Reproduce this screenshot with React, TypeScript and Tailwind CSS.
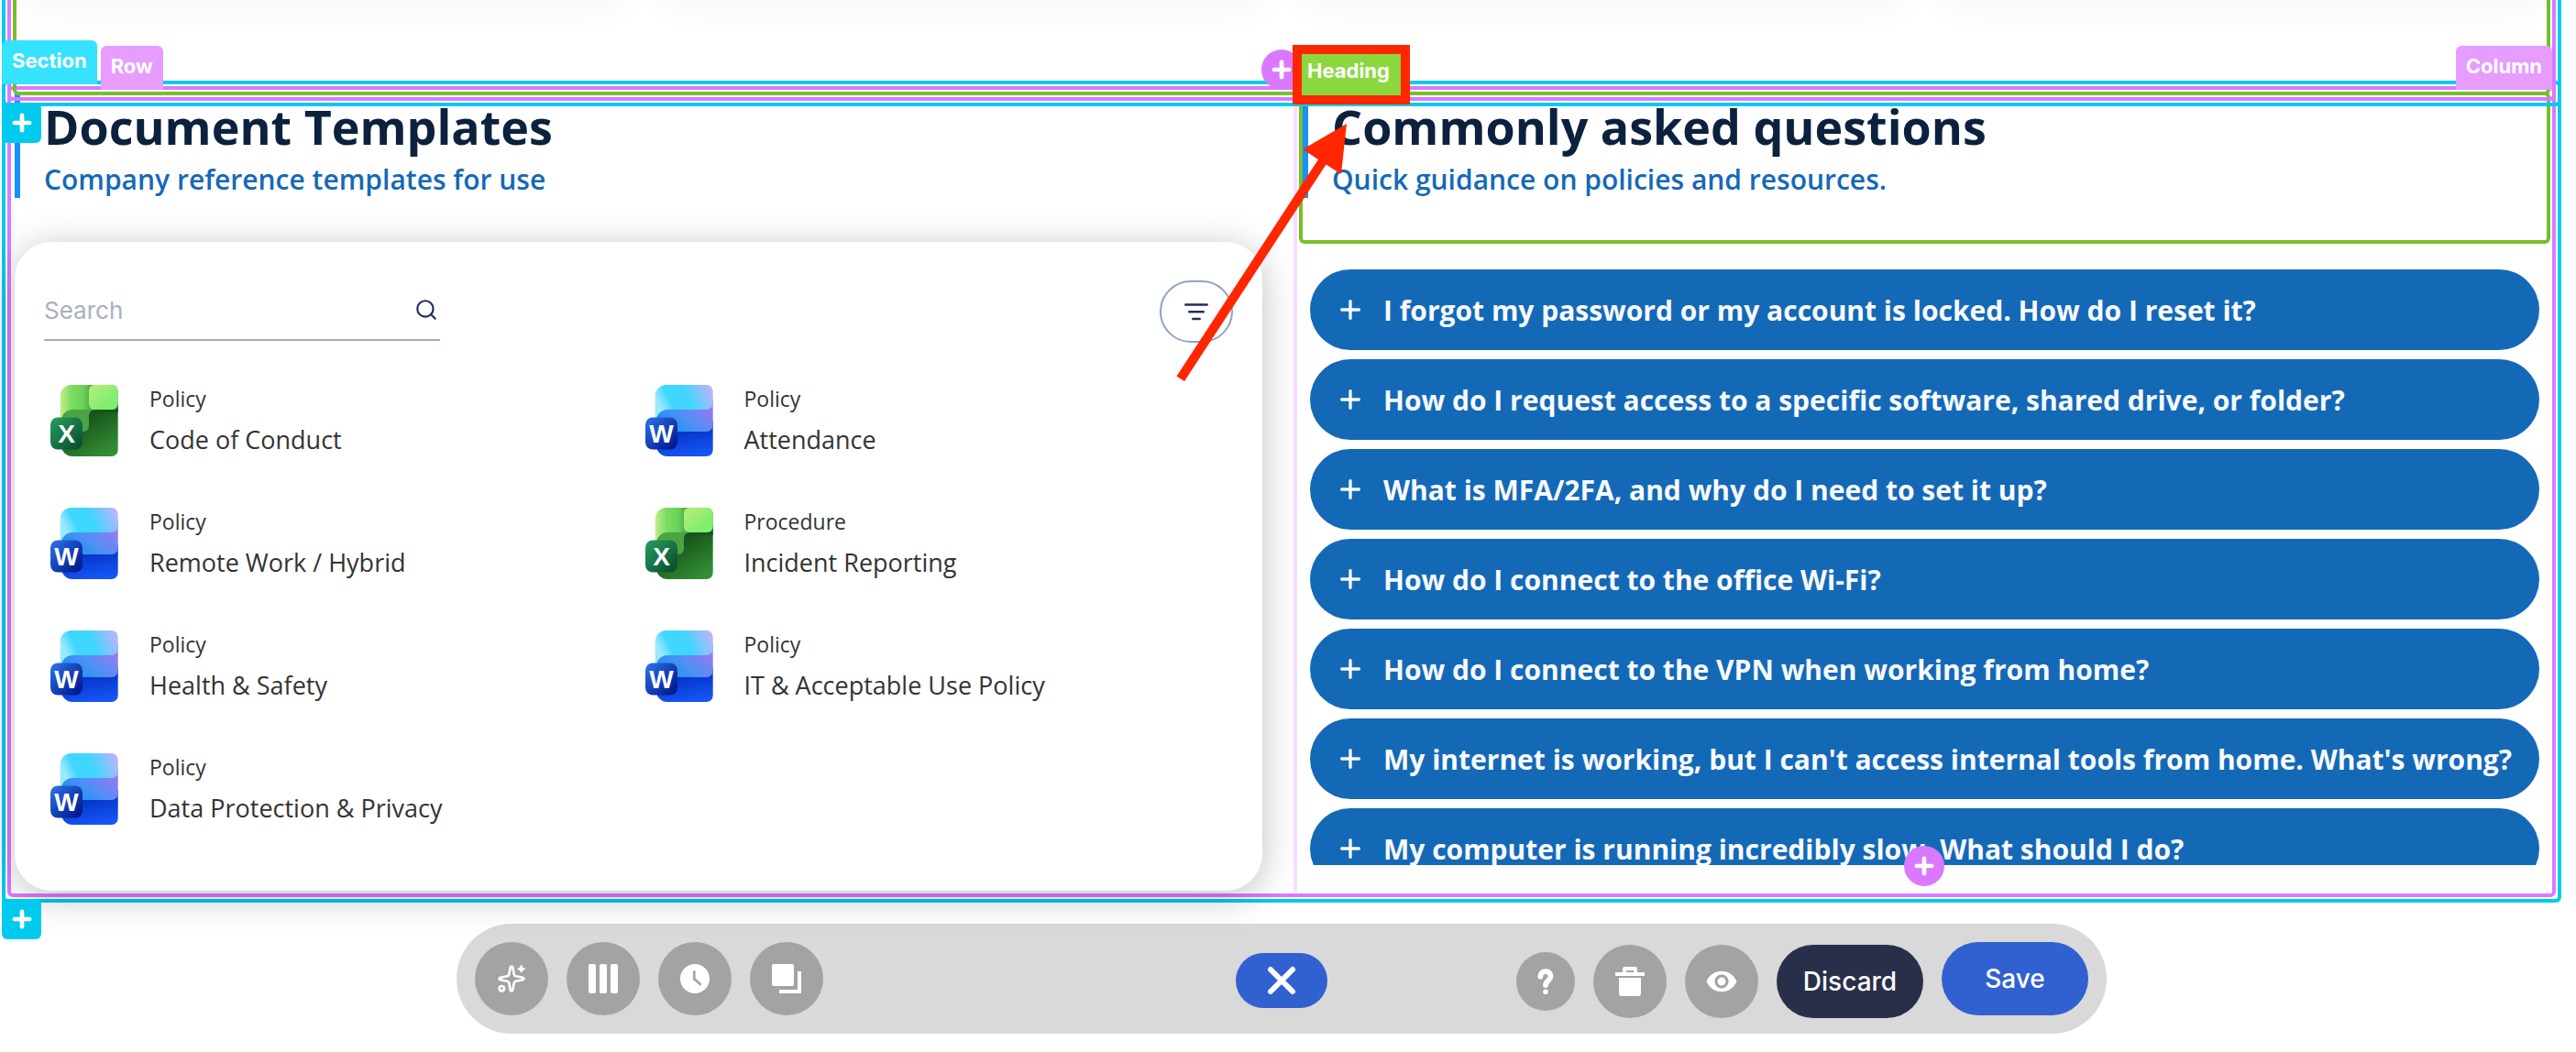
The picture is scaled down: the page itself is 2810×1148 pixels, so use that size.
import { useState } from 'react';
import { Plus, Search, Sparkles, X } from 'lucide-react';
import { MdVisibility } from 'react-icons/md';

type FileKind = 'word' | 'excel';

const DOCUMENTS: { kind: FileKind; type: string; title: string }[] = [
  { kind: 'excel', type: 'Policy', title: 'Code of Conduct' },
  { kind: 'word', type: 'Policy', title: 'Attendance' },
  { kind: 'word', type: 'Policy', title: 'Remote Work / Hybrid' },
  { kind: 'excel', type: 'Procedure', title: 'Incident Reporting' },
  { kind: 'word', type: 'Policy', title: 'Health & Safety' },
  { kind: 'word', type: 'Policy', title: 'IT & Acceptable Use Policy' },
  { kind: 'word', type: 'Policy', title: 'Data Protection & Privacy' },
];

const QUESTIONS = [
  'I forgot my password or my account is locked. How do I reset it?',
  'How do I request access to a specific software, shared drive, or folder?',
  'What is MFA/2FA, and why do I need to set it up?',
  'How do I connect to the office Wi-Fi?',
  'How do I connect to the VPN when working from home?',
  "My internet is working, but I can't access internal tools from home. What's wrong?",
  'My computer is running incredibly slow. What should I do?',
];

function WordIcon() {
  return (
    <svg viewBox="0 0 74 78" className="w-[74px] h-[78px] shrink-0" aria-hidden="true">
      <defs>
        <linearGradient id="word-top" x1="0" y1="0.3" x2="1" y2="0">
          <stop offset="0" stopColor="#9be9fb" />
          <stop offset="0.2" stopColor="#3fd6ff" />
          <stop offset="0.5" stopColor="#3fd6ff" />
          <stop offset="1" stopColor="#cdb0ff" />
        </linearGradient>
        <linearGradient id="word-mid" x1="0" y1="1" x2="1" y2="0.3">
          <stop offset="0.2" stopColor="#2292f0" />
          <stop offset="0.55" stopColor="#5090f6" />
          <stop offset="1" stopColor="#9a78f0" />
        </linearGradient>
        <linearGradient id="word-low" x1="0.3" y1="0" x2="0.6" y2="1">
          <stop offset="0.3" stopColor="#0535c8" />
          <stop offset="1" stopColor="#1656f6" />
        </linearGradient>
        <linearGradient id="word-badge" x1="0" y1="0" x2="1" y2="1">
          <stop offset="0" stopColor="#2f74ea" />
          <stop offset="0.9" stopColor="#001a8e" />
        </linearGradient>
      </defs>
      <path d="M12 40H73.7V71a7 7 0 0 1-7 7H24a12 12 0 0 1-12-12Z" fill="url(#word-low)" />
      <path d="M12 15H73.7V44a7 7 0 0 1-7 7H12Z" fill="url(#word-mid)" />
      <path
        d="M22.7 0H66.7a7 7 0 0 1 7 7V20a7 7 0 0 1-7 7H24a12 12 0 0 0-12 12H10.7V12a12 12 0 0 1 12-12Z"
        fill="url(#word-top)"
      />
      <rect y="35.5" width="35" height="35" rx="8" fill="url(#word-badge)" />
      <text x="17.5" y="63" textAnchor="middle" className="fill-white text-[28px] font-bold font-['Liberation_Sans',sans-serif]">
        W
      </text>
    </svg>
  );
}

function ExcelIcon() {
  return (
    <svg viewBox="0 0 74 78" className="w-[74px] h-[78px] shrink-0" aria-hidden="true">
      <defs>
        <linearGradient id="excel-top" x1="0" y1="0" x2="1" y2="0">
          <stop offset="0" stopColor="#c3ee8c" />
          <stop offset="0.2" stopColor="#7bdc60" />
          <stop offset="0.4" stopColor="#6bd25a" />
          <stop offset="0.55" stopColor="#4aa446" />
        </linearGradient>
        <linearGradient id="excel-tile" x1="0" y1="0" x2="1" y2="1">
          <stop offset="0" stopColor="#bcec78" />
          <stop offset="0.7" stopColor="#80ee70" />
        </linearGradient>
        <linearGradient id="excel-low" x1="0.2" y1="0.2" x2="0.7" y2="1">
          <stop offset="0.2" stopColor="#17541b" />
          <stop offset="1" stopColor="#338d35" />
        </linearGradient>
        <linearGradient id="excel-badge" x1="0" y1="0" x2="1" y2="1">
          <stop offset="0" stopColor="#25a060" />
          <stop offset="0.9" stopColor="#0b5030" />
        </linearGradient>
      </defs>
      <path d="M12 20H73.7V71a7 7 0 0 1-7 7H24a12 12 0 0 1-12-12Z" fill="url(#excel-low)" />
      <path
        d="M22.7 0H66.7a7 7 0 0 1 7 7V27H48a6 6 0 0 0-6 6V39H10.7V12a12 12 0 0 1 12-12Z"
        fill="url(#excel-top)"
      />
      <path d="M60 20H73.7V30H60Z" fill="#17541b" />
      <path d="M24 27H48a6 6 0 0 0-6 6V45a6 6 0 0 1-6 6H12V39a12 12 0 0 1 12-12Z" fill="#4aa446" />
      <rect x="42" width="31.7" height="27" rx="6" fill="url(#excel-tile)" />
      <rect y="35.5" width="35" height="35" rx="8" fill="url(#excel-badge)" />
      <text x="17.5" y="63" textAnchor="middle" className="fill-white text-[28px] font-bold font-['Liberation_Sans',sans-serif]">
        X
      </text>
    </svg>
  );
}

function FilterIcon() {
  return (
    <svg viewBox="0 0 26 20" className="w-[26px] h-5" stroke="#1f2d62" strokeWidth="2.5" strokeLinecap="round" aria-hidden="true">
      <path d="M1.3 2.5H24.7M5.3 10.3H20.7M9.3 18H16.7" />
    </svg>
  );
}

function ColumnsIcon() {
  return (
    <svg viewBox="0 0 32 32" className="size-8" fill="currentColor" aria-hidden="true">
      <rect width="8" height="32" rx="2" />
      <rect x="12" width="8" height="32" rx="2" />
      <rect x="24" width="8" height="32" rx="2" />
    </svg>
  );
}

function ClockIcon() {
  return (
    <svg viewBox="0 0 32 32" className="size-8" aria-hidden="true">
      <circle cx="16" cy="16" r="16" fill="currentColor" />
      <path d="M15.3 7.3V16.3L22.7 22.7" fill="none" stroke="#a3a3a3" strokeWidth="2.7" />
    </svg>
  );
}

function LayersIcon() {
  return (
    <svg viewBox="0 0 32 32" className="size-8" fill="currentColor" aria-hidden="true">
      <rect width="24" height="24" rx="2" />
      <path d="M28 8H32V32H8V28H28Z" />
    </svg>
  );
}

function QuestionIcon() {
  return (
    <svg viewBox="0 0 18 28" className="w-[18px] h-7" aria-hidden="true">
      <path
        d="M3.3 8.7C3.3 5 5.6 3.1 9 3.1C12.3 3.1 14.5 5.2 14.5 8.5C14.5 12.8 9 13.5 9 18"
        fill="none"
        stroke="currentColor"
        strokeWidth="5.8"
        strokeLinecap="round"
      />
      <circle cx="9" cy="25.2" r="2.8" fill="currentColor" />
    </svg>
  );
}

function TrashIcon() {
  return (
    <svg viewBox="0 0 32 32" className="size-8" fill="currentColor" aria-hidden="true">
      <path d="M10 0H22a2 2 0 0 1 2 2V6H32V10H0V6H8V2a2 2 0 0 1 2-2ZM12 4V6H20V4Z" fillRule="evenodd" />
      <path d="M4 12H28V29a3 3 0 0 1-3 3H7a3 3 0 0 1-3-3Z" />
    </svg>
  );
}

function SectionHeading({ title, subtitle }: { title: string; subtitle: string }) {
  return (
    <div className="h-[116px] pt-1.5 pl-[26px] border-l-6 border-[#1890ff]">
      <h2 className="text-[52px] leading-[64px] font-bold text-[#0c213d] whitespace-nowrap">{title}</h2>
      <p className="text-[30px] leading-[52px] font-semibold text-[#1469b7] whitespace-nowrap">{subtitle}</p>
    </div>
  );
}

function DocumentsCard() {
  return (
    <div className="mt-12 h-[708px] rounded-[40px] bg-white px-8 pt-[42px] shadow-[0_6px_40px_rgba(0,0,0,0.25)]">
      <div className="flex justify-between">
        <div className="flex items-center w-[432px] h-[66px] pr-0.5 border-b-2 border-[#a5abc3]">
          <input
            type="text"
            aria-label="Search documents"
            placeholder="Search"
            className="flex-1 min-w-0 outline-none font-['Inter',sans-serif] text-[26px] text-[#1f2d62] placeholder:text-[#a9aec2]"
          />
          <Search size={26} color="#1f2d62" />
        </div>
        <button
          aria-label="Filter"
          className="flex items-center justify-center w-20 h-[68px] rounded-full border-2 border-[#8fa3c9]"
        >
          <FilterIcon />
        </button>
      </div>

      <ul className="mt-[18px] grid grid-cols-2">
        {DOCUMENTS.map((doc) => (
          <li key={doc.title}>
            <a href="#" className="flex items-center h-[134px] pl-[7px] gap-[34px] text-[#333333]">
              {doc.kind === 'word' ? <WordIcon /> : <ExcelIcon />}
              <span className="flex flex-col pt-0.5">
                <span className="text-[23px] leading-10">{doc.type}</span>
                <span className="text-[27px] leading-[50px]">{doc.title}</span>
              </span>
            </a>
          </li>
        ))}
      </ul>
    </div>
  );
}

function FaqList() {
  const [open, setOpen] = useState<number | null>(null);

  return (
    <div className="h-[650px] mt-7 ml-3 mr-3 flex flex-col gap-2.5 overflow-hidden">
      {QUESTIONS.map((question, i) => (
        <button
          key={question}
          aria-expanded={open === i}
          onClick={() => setOpen(open === i ? null : i)}
          className="flex items-center shrink-0 h-[88px] pl-7 gap-5 rounded-full bg-[#1469b7] text-[#f8fafc]"
        >
          <Plus size={32} strokeWidth={2.5} />
          <span className="pt-0.5 text-[30px] leading-10 font-bold whitespace-nowrap">{question}</span>
        </button>
      ))}
    </div>
  );
}

function AddSectionButton() {
  return (
    <button aria-label="Add section" className="flex items-center justify-center w-[43px] h-11 rounded-b-md rounded-tr-md bg-[#00cbef] text-white">
      <Plus size={28} strokeWidth={4} />
    </button>
  );
}

function AddBlockButton() {
  return (
    <button aria-label="Add block" className="flex items-center justify-center size-11 rounded-full bg-[#da79ff] text-white">
      <Plus size={28} strokeWidth={4} />
    </button>
  );
}

function Toolbar() {
  const round = 'flex items-center justify-center size-20 rounded-full bg-[#a3a3a3] text-white';

  return (
    <div className="mt-[23px] mx-auto w-[1800px] max-w-full h-[120px] px-5 rounded-full bg-[#d9d9d9] grid grid-cols-[1fr_auto_1fr] items-center font-['Inter',sans-serif]">
      <div className="flex gap-5">
        <button aria-label="Assistant" className={round}>
          <Sparkles size={32} />
        </button>
        <button aria-label="Layout" className={round}>
          <ColumnsIcon />
        </button>
        <button aria-label="History" className={round}>
          <ClockIcon />
        </button>
        <button aria-label="Duplicate" className={round}>
          <LayersIcon />
        </button>
      </div>

      <div className="pt-1">
        <button aria-label="Close toolbar" className="flex items-center justify-center w-[100px] h-[60px] rounded-full bg-[#3161d1] text-white">
          <X size={48} strokeWidth={3} />
        </button>
      </div>

      <div className="flex items-center justify-end gap-5">
        <div className="flex items-center gap-5 pt-1.5">
          <button aria-label="Help" className="flex items-center justify-center size-16 rounded-full bg-[#a3a3a3] text-white">
            <QuestionIcon />
          </button>
          <button aria-label="Delete" className={round}>
            <TrashIcon />
          </button>
          <button aria-label="Preview" className={round}>
            <MdVisibility size={36} />
          </button>
          <button className="w-40 h-20 rounded-full bg-[#2a2f49] text-white text-[28px] font-medium">Discard</button>
        </div>
        <button className="w-40 h-20 rounded-full bg-[#3161d1] text-white text-[28px] font-medium">Save</button>
      </div>
    </div>
  );
}

export default function App() {
  return (
    <div className="relative bg-white pb-5 pl-0.5 pr-4 overflow-hidden font-['Open_Sans','Noto_Sans',sans-serif]">
      {/* Tail of the section above */}
      <div className="relative z-10 pointer-events-none h-[116px] px-0.5 pb-0.5 border-4 border-t-0 rounded-b-md border-[#00cbef]">
        <div className="h-full px-0.5 pb-0.5 border-4 border-t-0 rounded-b-md border-[#da79ff]">
          <div className="h-full border-4 border-t-0 rounded-b-md border-[#78be2b]">
            <div className="grid grid-cols-4 gap-8">
              <div className="h-16 -mt-16 rounded-[40px] shadow-[0_6px_40px_rgba(0,0,0,0.05)]" />
              <div className="h-16 -mt-16 rounded-[40px] shadow-[0_6px_40px_rgba(0,0,0,0.05)]" />
              <div className="h-16 -mt-16 rounded-[40px] shadow-[0_6px_40px_rgba(0,0,0,0.05)]" />
              <div className="h-16 -mt-16 rounded-[40px] shadow-[0_6px_40px_rgba(0,0,0,0.05)]" />
            </div>
          </div>
        </div>
      </div>

      {/* Selected section */}
      <section className="relative -mt-7 p-0.5 border-4 rounded-md border-[#00cbef]">
        <div className="p-0.5 border-4 rounded-md border-[#da79ff]">
          <div className="grid grid-cols-[1397fr_1371fr]">
            <div className="pl-0.5 pr-[34px] pb-px">
              <SectionHeading title="Document Templates" subtitle="Company reference templates for use" />
              <DocumentsCard />
            </div>

            <div className="relative border-l-4 border-[#f6deff] pl-0.5">
              <div className="h-[166px] border-4 rounded-md border-[#78be2b]">
                <div className="-mt-1">
                  <SectionHeading title="Commonly asked questions" subtitle="Quick guidance on policies and resources." />
                </div>
              </div>
              <FaqList />
              <div className="absolute z-20 bottom-1.5 left-1/2 -translate-x-1/2">
                <AddBlockButton />
              </div>
            </div>
          </div>
        </div>

        {/* Editor handles */}
        <div className="absolute z-20 -top-12 -left-1 flex items-end gap-1 font-['Inter',sans-serif] text-[22px] font-bold text-white">
          <span className="h-12 mb-1.5 px-[11px] pt-1.5 rounded-t-md bg-[#35e2ff]">Section</span>
          <span className="h-12 px-[11px] pt-1.5 rounded-t-md bg-[#e69dff]">Row</span>
        </div>
        <span className="absolute z-20 -top-[42px] right-1.5 h-12 px-[11px] pt-1.5 rounded-t-md bg-[#e69dff] font-['Inter',sans-serif] text-[22px] font-bold text-white">
          Column
        </span>
        <div className="absolute z-20 top-5 -left-1">
          <AddSectionButton />
        </div>
        <div className="absolute z-20 -bottom-11 -left-1">
          <AddSectionButton />
        </div>
        <div className="absolute z-20 -top-[38px] left-1/2 -translate-x-1/2">
          <AddBlockButton />
        </div>

        {/* Callout over the heading handle */}
        <div className="absolute z-30 -top-[43px] left-1/2 ml-3 w-32 h-[65px] pl-1.5 pt-0.5 border-10 border-[#ff2600] bg-[#8bd83e] font-['Inter',sans-serif] text-[22px] font-bold text-white">
          Heading
        </div>
        <svg viewBox="0 0 188 284" className="absolute z-30 top-10 left-1/2 -ml-[116px] w-[188px] h-[284px]" fill="#ff2600" aria-hidden="true">
          <path d="M187 3L181 58L164.5 47.5L10 284L1.5 278.5L156 42L139 31Z" />
        </svg>
      </section>

      <Toolbar />
    </div>
  );
}
